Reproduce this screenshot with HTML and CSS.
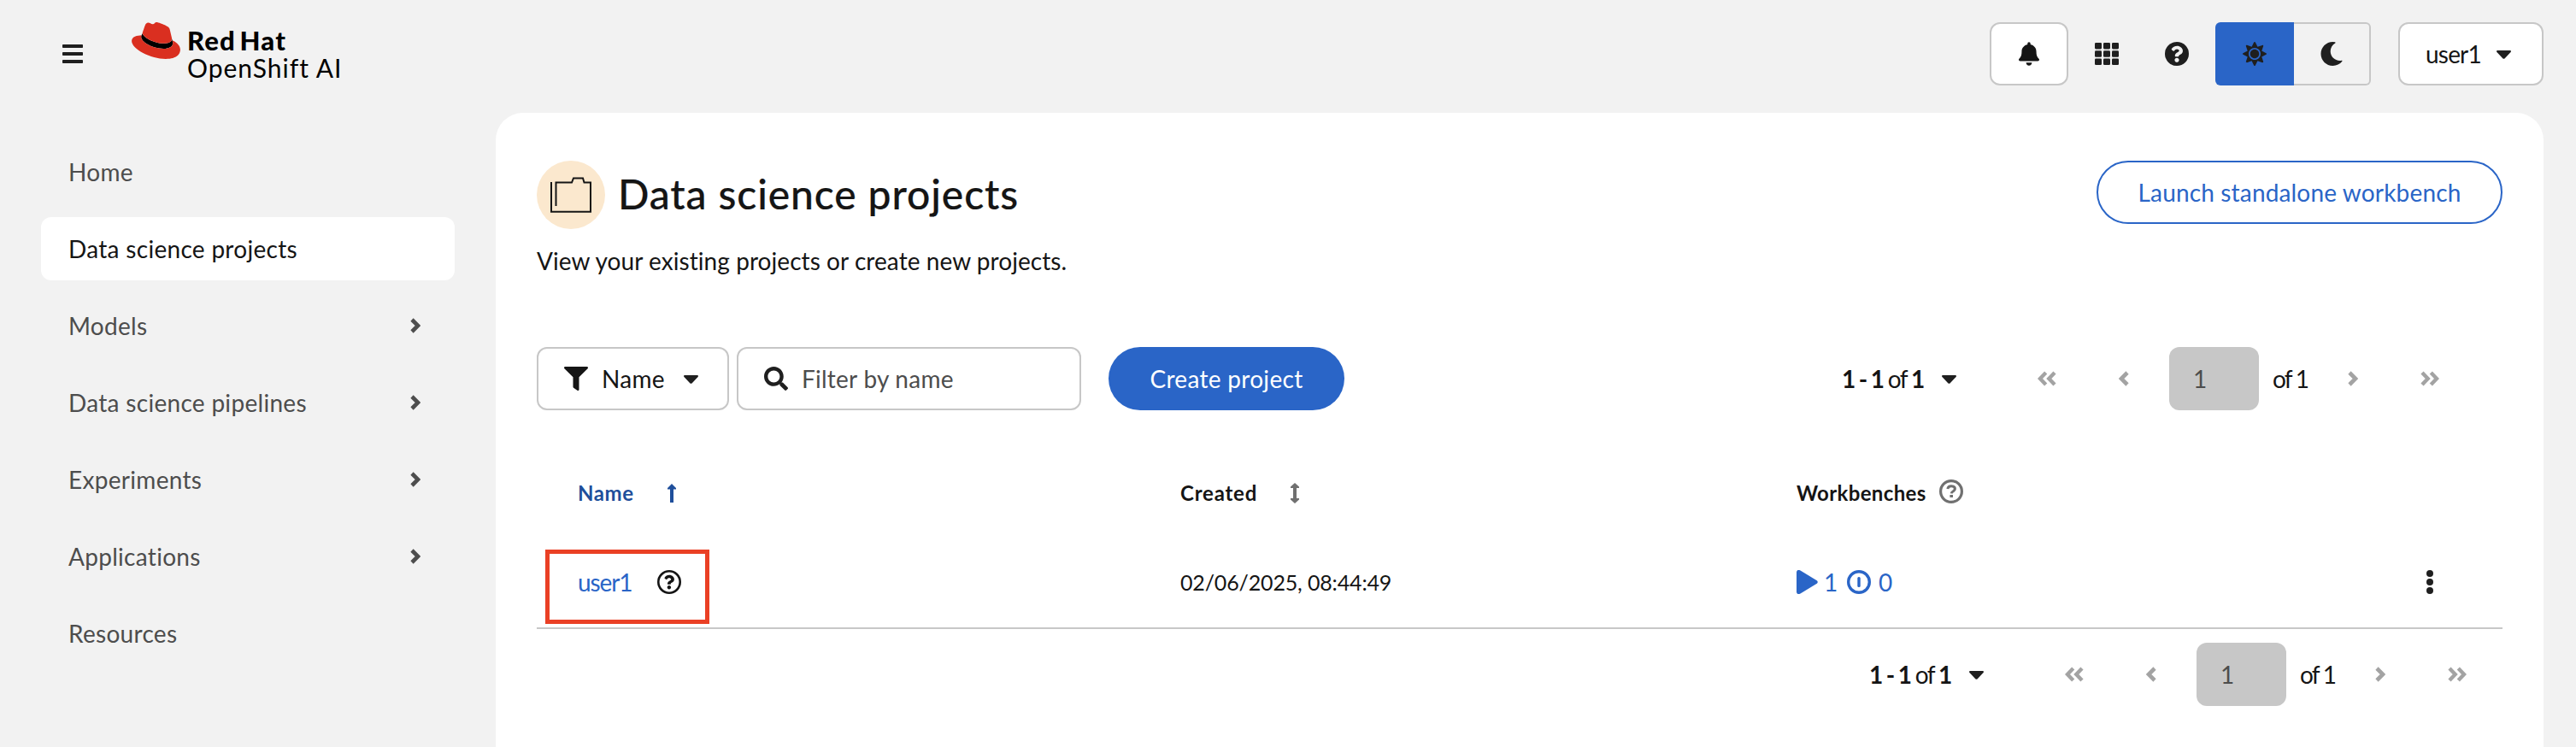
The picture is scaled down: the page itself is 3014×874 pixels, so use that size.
FILE: index.html
```html
<!DOCTYPE html>
<html lang="en">
<head>
<meta charset="utf-8">
<title>Data science projects</title>
<link rel="stylesheet" href="styles.css">
</head>
<body>
<svg class="defs" aria-hidden="true">
  <symbol id="question" viewBox="0 0 512 512"><path d="M262.655 90c-54.497 0-89.255 22.957-116.549 63.758-3.536 5.286-2.353 12.415 2.715 16.258l34.699 26.31c5.205 3.947 12.621 3.008 16.665-2.122 17.864-22.658 30.113-35.797 57.303-35.797 20.429 0 45.698 13.148 45.698 32.958 0 14.976-12.363 22.667-32.534 33.976C247.128 238.528 216 254.941 216 296v4c0 6.627 5.373 12 12 12h56c6.627 0 12-5.373 12-12v-1.333c0-28.462 83.186-29.647 83.186-106.667 0-58.002-60.165-102-116.531-102zM256 338c-25.365 0-46 20.635-46 46 0 25.364 20.635 46 46 46s46-20.636 46-46c0-25.365-20.635-46-46-46z"/></symbol>
  <symbol id="caret" viewBox="0 0 17 10"><path d="M1.2 0h14.6c1 0 1.500 1.100.8 1.900L9.500 9.400c-.6.600-1.400.600-2 0L.4 1.900C-.3 1.100.2 0 1.200 0z"/></symbol>
  <symbol id="right" viewBox="0 0 12 18"><path d="M2 2 9 9l-7 7" fill="none" stroke="currentColor" stroke-width="4.600"/></symbol>
  <symbol id="left" viewBox="0 0 12 18"><path d="M10 2 3 9l7 7" fill="none" stroke="currentColor" stroke-width="4.600"/></symbol>
  <symbol id="last" viewBox="0 0 22 18"><path d="M2 2l6.700 7-6.700 7M12.300 2 19 9l-6.700 7" fill="none" stroke="currentColor" stroke-width="4.400"/></symbol>
  <symbol id="first" viewBox="0 0 22 18"><path d="M20 2l-6.700 7 6.700 7M9.700 2 3 9l6.700 7" fill="none" stroke="currentColor" stroke-width="4.400"/></symbol>
</svg>

<header class="masthead">
  <svg class="menu" viewBox="0 0 24 22"><rect width="24" height="4" rx=".8"/><rect y="9" width="24" height="4" rx=".8"/><rect y="18" width="24" height="4" rx=".8"/></svg>
  <div class="brand">
    <svg class="hat" viewBox="0 2.920 24 18.160">
      <path d="M20.110 11.950c.218 1.032.218 1.140.218 1.277 0 1.765-1.984 2.745-4.593 2.745-5.895.004-11.060-3.451-11.060-5.734a2.326 2.326 0 0 1 .19-.925L5.300 8.400c0 1.162 4.577 4.974 10.710 4.986 1.577 0 3.860-.326 3.860-2.202z"/>
      <path fill="#da2f20" d="M16.009 13.386c1.577 0 3.860-.326 3.860-2.202a1.765 1.765 0 0 0-.04-.431l-.94-4.080c-.216-.898-.406-1.305-1.982-2.093-1.223-.625-3.888-1.658-4.676-1.658-.733 0-.947.946-1.822.946-.842 0-1.467-.706-2.255-.706-.757 0-1.250.515-1.630 1.576 0 0-1.060 2.990-1.197 3.424a.81.81 0 0 0-.028.245c0 1.162 4.577 4.974 10.710 4.974m4.101-1.435c.218 1.032.218 1.140.218 1.277 0 1.765-1.984 2.745-4.593 2.745-5.895.004-11.060-3.451-11.060-5.734a2.326 2.326 0 0 1 .19-.925C2.746 9.415 0 9.794 0 12.217c0 3.969 9.405 8.861 16.851 8.861 5.710 0 7.149-2.582 7.149-4.620 0-1.605-1.387-3.425-3.887-4.512"/>
    </svg>
    <div class="brand-text"><b class="red-hat">Red Hat</b><span class="product">OpenShift AI</span></div>
  </div>
  <div class="tools">
    <button class="tool bell"><svg width="24" height="28" viewBox="0 0 448 512"><path d="M224 512c35.320 0 63.970-28.650 63.970-64H160.030c0 35.350 28.650 64 63.970 64zm215.390-149.710c-19.320-20.760-55.470-51.990-55.470-154.290 0-77.700-54.480-139.900-127.940-155.160V32c0-17.670-14.320-32-31.980-32s-31.980 14.330-31.980 32v20.840C118.560 68.100 64.080 130.300 64.080 208c0 102.300-36.150 133.530-55.470 154.290-6 6.450-8.660 14.160-8.610 21.710.11 16.400 12.980 32 32.100 32h383.800c19.120 0 32-15.600 32.100-32 .05-7.550-2.610-15.270-8.610-21.710z"/></svg></button>
    <button class="plain apps"><svg width="28" height="26" viewBox="0 0 28 26"><rect width="8" height="7.400" rx="1.300"/><rect x="10" width="8" height="7.400" rx="1.300"/><rect x="20" width="8" height="7.400" rx="1.300"/><rect y="9.300" width="8" height="7.400" rx="1.300"/><rect x="10" y="9.300" width="8" height="7.400" rx="1.300"/><rect x="20" y="9.300" width="8" height="7.400" rx="1.300"/><rect y="18.600" width="8" height="7.400" rx="1.300"/><rect x="10" y="18.600" width="8" height="7.400" rx="1.300"/><rect x="20" y="18.600" width="8" height="7.400" rx="1.300"/></svg></button>
    <button class="plain help"><svg width="28" height="28" viewBox="8 8 496 496"><circle cx="256" cy="256" r="248"/><use href="#question" width="512" height="512" fill="#f2f2f2"/></svg></button>
    <div class="theme">
      <button class="light"><svg width="28" height="28" viewBox="0 0 512 512"><path d="M256 160c-52.900 0-96 43.100-96 96s43.100 96 96 96 96-43.100 96-96-43.100-96-96-96zm246.400 80.500l-94.700-47.300 33.500-100.400c4.500-13.600-8.400-26.500-21.900-21.900l-100.400 33.500-47.400-94.800c-6.400-12.800-24.600-12.800-31 0l-47.300 94.700L92.700 70.800c-13.600-4.500-26.500 8.400-21.900 21.900l33.500 100.400-94.700 47.400c-12.800 6.400-12.800 24.600 0 31l94.700 47.300-33.500 100.500c-4.500 13.600 8.400 26.500 21.900 21.900l100.400-33.500 47.300 94.700c6.400 12.800 24.600 12.800 31 0l47.300-94.700 100.400 33.500c13.600 4.500 26.500-8.400 21.900-21.900l-33.500-100.400 94.700-47.300c13-6.500 13-24.700.2-31.100zm-155.900 106c-49.900 49.900-131.100 49.900-181 0-49.900-49.900-49.900-131.100 0-181 49.900-49.900 131.100-49.900 181 0 49.900 49.900 49.900 131.100 0 181z"/></svg></button>
      <button class="dark"><svg width="28" height="28" viewBox="0 0 512 512"><path d="M283.211 512c78.962 0 151.079-35.925 198.857-94.792 7.068-8.708-.639-21.430-11.562-19.350-124.203 23.654-238.262-71.576-238.262-196.954 0-72.222 38.662-138.635 101.498-174.394 9.686-5.512 7.250-20.197-3.756-22.230A258.156 258.156 0 0 0 283.211 0c-141.309 0-256 114.511-256 256 0 141.309 114.511 256 256 256z"/></svg></button>
    </div>
    <button class="tool account"><span class="account-name">user1</span><svg class="caret"><use href="#caret"/></svg></button>
  </div>
</header>

<div class="body">
  <nav class="sidebar">
    <a class="item"><span>Home</span></a>
    <a class="item current"><span>Data science projects</span></a>
    <a class="item"><span>Models</span><svg class="angle"><use href="#right"/></svg></a>
    <a class="item"><span>Data science pipelines</span><svg class="angle"><use href="#right"/></svg></a>
    <a class="item"><span>Experiments</span><svg class="angle"><use href="#right"/></svg></a>
    <a class="item"><span>Applications</span><svg class="angle"><use href="#right"/></svg></a>
    <a class="item"><span>Resources</span></a>
  </nav>

  <main class="page">
    <div class="title-row">
      <span class="badge"><svg class="folder" width="50" height="42" viewBox="0 0 50 42"><path d="M2 6v34.700h46V6.500h-7.500l-1.500-5H28l-2 5H7.500V34"/></svg></span>
      <h1 class="title">Data science projects</h1>
      <button class="launch"><span>Launch standalone workbench</span></button>
    </div>
    <p class="lead">View your existing projects or create new projects.</p>

    <div class="toolbar">
      <button class="field filter"><svg width="28" height="28" viewBox="0 0 512 512"><path d="M487.976 0H24.028C2.710 0-8.047 25.866 7.058 40.971L192 225.941V432c0 7.831 3.821 15.170 10.237 19.662l80 55.980C298.020 518.690 320 507.493 320 487.980V225.941l184.947-184.970C520.021 25.896 509.338 0 487.976 0z"/></svg><span class="filter-name">Name</span><svg class="caret"><use href="#caret"/></svg></button>
      <div class="field search"><svg width="28" height="28" viewBox="0 0 512 512"><path d="M505 442.700L405.300 343c-4.500-4.500-10.600-7-17-7H372c27.600-35.300 44-79.700 44-128C416 93.100 322.900 0 208 0S0 93.100 0 208s93.100 208 208 208c48.300 0 92.700-16.400 128-44v16.300c0 6.400 2.500 12.500 7 17l99.700 99.700c9.400 9.400 24.600 9.400 33.900 0l28.300-28.300c9.400-9.400 9.400-24.600.1-34zM208 336c-70.700 0-128-57.200-128-128 0-70.700 57.200-128 128-128 70.700 0 128 57.200 128 128 0 70.700-57.200 128-128 128z"/></svg><span class="placeholder">Filter by name</span></div>
      <button class="create"><span>Create project</span></button>
      <div class="pager">
        <span class="range"><b>1 - 1</b> of <b>1</b></span><svg class="caret"><use href="#caret"/></svg>
        <svg class="double first"><use href="#first"/></svg><svg class="single prev"><use href="#left"/></svg>
        <span class="page-box"><span>1</span></span><span class="total">of 1</span>
        <svg class="single next"><use href="#right"/></svg><svg class="double last"><use href="#last"/></svg>
      </div>
    </div>

    <div class="table">
      <div class="row head">
        <div class="cell sorted"><span class="h-name">Name</span><svg width="10" height="22" viewBox="0 0 10 22"><path d="M5 0 10 5v1.500H7V22H3V6.500H0V5z"/></svg></div>
        <div class="cell"><span class="h-created">Created</span><svg class="unsorted" width="10" height="24" viewBox="0 0 10 24"><path d="M5 0 10 4.500V6H7v12h3v1.500L5 24 0 19.500V18h3V6H0V4.500z"/></svg></div>
        <div class="cell"><span class="h-bench">Workbenches</span><svg class="bench-help" width="28" height="28" viewBox="0 0 28 28"><circle class="line" cx="14" cy="14" r="12.400" stroke-width="3.200"/><path class="line" d="M9.800 11c.5-2.400 2-3.200 4.300-3.200 2.500 0 4.300 1.200 4.300 3.300 0 2.800-3.900 2.400-4.200 5.200" stroke-width="3"/><rect x="12.400" y="18" width="3.600" height="3"/></svg></div>
        <div class="cell"></div>
      </div>
      <div class="row">
        <div class="cell"><a class="link u-name">user1</a><svg class="row-help" width="28" height="28" viewBox="0 0 28 28"><circle class="line" cx="14" cy="14" r="12.700" stroke-width="2.600"/><use href="#question" x="1.400" y="1.400" width="25" height="25"/></svg><i class="highlight"></i></div>
        <div class="cell"><span class="date">02/06/2025, 08:44:49</span></div>
        <div class="cell link"><svg width="25" height="28" viewBox="0 0 25 28"><path d="M4.500.500 23.800 12.300c1.300.8 1.300 2.600 0 3.400L4.500 27.500C2 29 0 27.500 0 25.500v-23C0 .5 2-1 4.500.500z"/></svg><span class="running">1</span><svg width="28" height="28" viewBox="0 0 28 28"><circle class="line" cx="14" cy="14" r="12.300" stroke-width="3.400"/><rect x="12.300" y="8" width="3.400" height="12" rx="1.500"/></svg><span class="stopped">0</span></div>
        <div class="cell"><svg class="kebab" width="8" height="28" viewBox="0 0 8 28"><circle cx="4" cy="4" r="4"/><circle cx="4" cy="14" r="4"/><circle cx="4" cy="24" r="4"/></svg></div>
      </div>
    </div>

    <div class="pager bottom">
      <span class="range"><b>1 - 1</b> of <b>1</b></span><svg class="caret"><use href="#caret"/></svg>
      <svg class="double first"><use href="#first"/></svg><svg class="single prev"><use href="#left"/></svg>
      <span class="page-box"><span>1</span></span><span class="total">of 1</span>
      <svg class="single next"><use href="#right"/></svg><svg class="double last"><use href="#last"/></svg>
    </div>
  </main>
</div>
</body>
</html>
```

FILE: styles.css
```css
* { box-sizing: border-box; }
body { margin: 0; width: 3014px; height: 874px; overflow: hidden; background: #f2f2f2; color: #151515; font: 28px/42px Lato, sans-serif; font-variant-ligatures: none; }
button { font: inherit; color: inherit; margin: 0; padding: 0; border: 0; background: none; display: flex; align-items: center; }
svg { display: block; flex: none; fill: currentColor; }
span, a, h1 { white-space: nowrap; }
.line { fill: none; stroke: currentColor; }
.defs { position: absolute; width: 0; height: 0; }
.caret { width: 17px; height: 10px; color: #1f1f1f; }

.masthead { height: 132px; display: flex; padding: 26px 38px 0 73px; color: #1f1f1f; }
.menu { width: 24px; height: 22px; margin-top: 26px; }
.brand { display: flex; margin-left: 57px; color: #000; }
.hat { width: 57px; height: 43px; }
.brand-text { display: flex; flex-direction: column; margin: 5px 0 0 8px; font-size: 30px; line-height: 32px; }
.red-hat { font-weight: 900; font-size: 31px; letter-spacing: 1.2px; word-spacing: -4px; }
.product { letter-spacing: 1px; }
.tools { display: flex; margin-left: auto; height: 74px; }
.tool { border: 2px solid #c7c7c7; border-radius: 12px; background: #fff; height: 74px; }
.bell { width: 92px; justify-content: center; color: #151515; }
.apps { margin-left: 31px; }
.help { margin-left: 54px; }
.theme { display: flex; width: 182px; margin-left: 31px; }
.light { width: 92px; height: 74px; justify-content: center; background: #2a65c7; border-radius: 6px 0 0 6px; }
.dark { width: 90px; height: 74px; justify-content: center; border: 2px solid #c7c7c7; border-left: 0; border-radius: 0 6px 6px 0; }
.account { width: 170px; margin-left: 32px; padding: 0 36px 0 30px; justify-content: space-between; color: #151515; }
.account-name { letter-spacing: -0.8px; }
.account .caret { margin-top: 2px; }

.body { display: flex; height: 742px; }
.sidebar { width: 580px; padding: 32px 48px; display: flex; flex-direction: column; gap: 16px; letter-spacing: 0.3px; }
.item { height: 74px; padding: 0 40px 0 32px; border-radius: 12px; display: flex; align-items: center; justify-content: space-between; color: #4d4d4d; }
.item.current { background: #fff; color: #151515; }
.angle, .single { width: 12px; height: 18px; }

.page { width: 2396px; padding: 56px 48px 0; background: #fff; border-radius: 32px 32px 0 0; }
.title-row { display: flex; height: 80px; }
.badge { width: 80px; height: 80px; border-radius: 50%; background: #fbe8ce; display: flex; align-items: center; justify-content: center; }
.folder { fill: none; stroke: #151515; stroke-width: 2px; }
.title { margin: 0 0 0 15px; font-size: 48px; font-weight: 500; line-height: 78px; letter-spacing: 0.9px; -webkit-text-stroke: 0.2px #151515; }
.launch { width: 475px; height: 74px; margin-left: auto; justify-content: center; border: 2px solid #2a65c7; border-radius: 37px; color: #2a65c7; letter-spacing: 0.16px; }
.lead { margin: 16px 0 0; height: 122px; white-space: nowrap; letter-spacing: 0.06px; }

.toolbar { display: flex; height: 74px; }
.field { height: 74px; border: 2px solid #c7c7c7; border-radius: 12px; display: flex; align-items: center; }
.filter { width: 225px; padding: 0 34px 0 30px; }
.filter-name { margin-left: 16px; letter-spacing: 0.3px; }
.filter .caret { margin: 2px 0 0 auto; }
.search { width: 403px; margin-left: 9px; padding-left: 30px; color: #1f1f1f; }
.placeholder { margin-left: 16px; color: #4d4d4d; letter-spacing: 0.25px; }
.create { width: 276px; height: 74px; margin-left: 32px; justify-content: center; background: #2a65c7; color: #fff; border-radius: 37px; letter-spacing: 0.3px; }

.pager { display: flex; align-items: center; height: 74px; margin-left: auto; padding-right: 74px; color: #a3a3a3; }
.pager.bottom { margin-top: 16px; justify-content: flex-end; padding-right: 42px; }
.range { width: 96px; color: #151515; letter-spacing: -1.5px; word-spacing: -0.3px; }
.pager .caret { margin: 2px 95px 0 21px; }
.double { width: 22px; height: 18px; }
.prev { margin-left: 73px; }
.page-box { width: 105px; height: 74px; margin-left: 47px; padding-left: 28px; background: #c7c7c7; border-radius: 12px; color: #4d4d4d; display: flex; align-items: center; }
.total { width: 41px; margin: 0 47px 0 16px; color: #151515; letter-spacing: -1.8px; }
.last { margin-left: 73px; }

.table { margin-top: 48px; }
.row { display: grid; grid-template-columns: 705px 721px 735px 139px; height: 110px; border-bottom: 2px solid #c7c7c7; }
.row.head { height: 98px; border: 0; font-size: 24px; font-weight: 700; }
.row:not(.head) .cell { padding-top: 1px; }
.cell { position: relative; display: flex; align-items: center; padding-left: 48px; }
.sorted { color: #1f4f9b; }
.sorted svg { margin-left: 40px; }
.h-name { width: 65px; letter-spacing: 0.6px; }
.h-created { width: 90px; letter-spacing: 0.8px; }
.unsorted { margin-left: 39px; color: #707070; }
.h-bench { width: 153px; letter-spacing: 0.35px; }
.bench-help { margin: -4px 0 0 14px; color: #707070; }
.link { color: #2a65c7; }
.u-name { width: 62px; letter-spacing: -1.1px; }
.row-help { margin-left: 31px; }
.highlight { position: absolute; left: 10px; top: 17px; width: 192px; height: 87px; border: 5px solid #ea4025; }
.date { font-size: 25px; letter-spacing: -0.15px; }
.running { width: 34px; padding-left: 7px; }
.stopped { margin-left: 9px; }
.kebab { margin-left: 2px; color: #1f1f1f; }
```
